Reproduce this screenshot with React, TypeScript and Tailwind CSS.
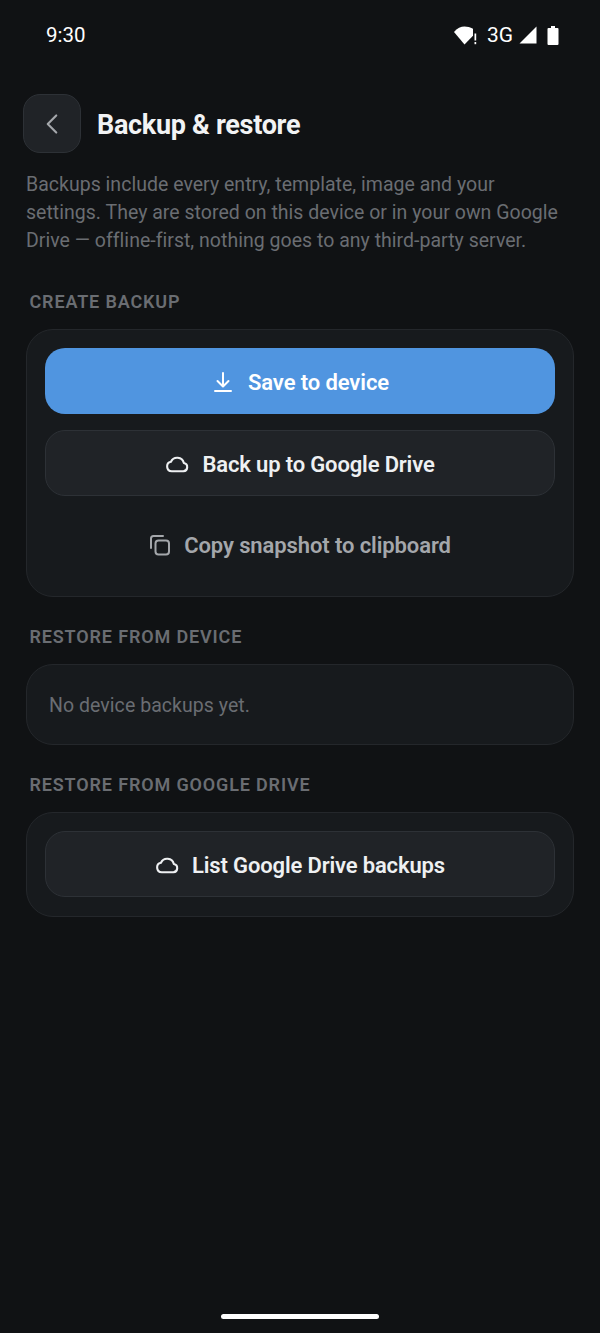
import { ChevronLeft } from "lucide-react";

function CloudIcon() {
  return (
    <svg
      width="25"
      height="25"
      viewBox="0 0 24 24"
      fill="none"
      stroke="currentColor"
      strokeWidth="2"
      strokeLinejoin="round"
    >
      <path d="M6.500 18.500a4.600 4.600 0 0 1-.8-9.100 6.600 6.600 0 0 1 12.400 1.200 4 4 0 0 1-.4 7.900z" />
    </svg>
  );
}

function SectionLabel({ children }: { children: string }) {
  return (
    <div className="pl-[3.5px] text-[18px] leading-[22px] font-semibold tracking-[0.85px] text-[#6a6d72]">
      {children}
    </div>
  );
}

function OutlineButton({ label }: { label: string }) {
  return (
    <button className="flex h-[66px] w-full items-center justify-center gap-[12px] rounded-[20px] border border-[#2d3136] bg-[#202327] pt-[3px] text-[22px] font-semibold tracking-[-0.15px] text-[#eef0f2]">
      <CloudIcon />
      {label}
    </button>
  );
}

export default function App() {
  return (
    <div className="relative flex h-[1333px] w-[600px] flex-col bg-[#101214] font-['Roboto',sans-serif]">
      {/* status bar */}
      <div className="flex h-[70px] items-center justify-between pr-[41px] pl-[46px] text-white">
        <span className="text-[20.5px] leading-none">9:30</span>
        <div className="flex items-center">
          <svg width="24" height="19" viewBox="0 0 24 19" fill="white">
            <path d="M0 6C3 2.200 7 0.500 10.500 0.500c3 0 5.500 0.700 8.500 2.300v7L10.500 18.500z" />
            <rect x="20.500" y="7.500" width="1.700" height="7" />
            <rect x="20.500" y="16" width="1.700" height="2.200" />
          </svg>
          <span className="ml-[9px] text-[21px] leading-none">3G</span>
          <svg className="ml-[6px]" width="18" height="18" viewBox="0 0 18 18" fill="white">
            <path d="M17.500 0.500V17.500H0.500z" />
          </svg>
          <svg className="ml-[10px]" width="12" height="19" viewBox="0 0 12 19" fill="white">
            <path d="M4 0h4v2h2.500a1 1 0 0 1 1 1v15a1 1 0 0 1-1 1h-9a1 1 0 0 1-1-1V3a1 1 0 0 1 1-1H4z" />
          </svg>
        </div>
      </div>

      {/* header */}
      <div className="mt-[24px] flex items-center pl-[23px]">
        <button className="flex h-[59px] w-[58px] items-center justify-center rounded-[17px] border border-[#2d3136] bg-[#202327] text-[#a4a7ab]">
          <ChevronLeft size={34} strokeWidth={1.5} />
        </button>
        <h1 className="mt-[4px] ml-[16px] text-[27px] leading-none font-bold tracking-[-0.3px] text-[#f2f3f4]">
          Backup &amp; restore
        </h1>
      </div>

      <div className="flex flex-col px-[26px]">
        <p className="mt-[18px] pr-[6px] text-[19.5px] leading-[28px] tracking-[0.02px] text-[#6a6d72]">
          Backups include every entry, template, image and your settings. They are stored on this
          device or in your own Google Drive — offline-first, nothing goes to any third-party
          server.
        </p>

        <div className="mt-[36px]">
          <SectionLabel>CREATE BACKUP</SectionLabel>
        </div>
        <div className="mt-[16px] flex flex-col rounded-[27px] border border-[#24272b] bg-[#171a1d] px-[18px] pt-[18px]">
          <button className="flex h-[66px] w-full items-center justify-center gap-[13px] rounded-[20px] bg-[#5095e0] pt-[2px] text-[22px] font-semibold tracking-[-0.1px] text-white">
            <svg
              width="24"
              height="24"
              viewBox="0 0 24 24"
              fill="none"
              stroke="currentColor"
              strokeWidth="2"
              strokeLinecap="round"
              strokeLinejoin="round"
            >
              <path d="M12 3v13M6.500 11l5.500 5.500 5.500-5.500M4 21h16" />
            </svg>
            Save to device
          </button>
          <div className="mt-[16px]">
            <OutlineButton label="Back up to Google Drive" />
          </div>
          <button className="flex h-[100px] w-full items-center justify-center gap-[13px] pb-[2px] text-[22px] font-semibold tracking-[-0.1px] text-[#a4a7ab]">
            <svg
              width="22"
              height="22"
              viewBox="0 0 22 22"
              fill="none"
              stroke="currentColor"
              strokeWidth="2"
              strokeLinecap="round"
              strokeLinejoin="round"
            >
              <rect x="6.500" y="6.500" width="13.500" height="14" rx="3" />
              <path d="M2 14V4.500A2.500 2.500 0 0 1 4.500 2H14" />
            </svg>
            Copy snapshot to clipboard
          </button>
        </div>

        <div className="mt-[29px]">
          <SectionLabel>RESTORE FROM DEVICE</SectionLabel>
        </div>
        <div className="mt-[16px] flex h-[81px] items-center rounded-[27px] border border-[#24272b] bg-[#171a1d] pt-[2px] pl-[22px] text-[19.5px] tracking-[0.05px] text-[#6a6d72]">
          No device backups yet.
        </div>

        <div className="mt-[29px]">
          <SectionLabel>RESTORE FROM GOOGLE DRIVE</SectionLabel>
        </div>
        <div className="mt-[16px] rounded-[27px] border border-[#24272b] bg-[#171a1d] px-[18px] pt-[18px] pb-[19px]">
          <OutlineButton label="List Google Drive backups" />
        </div>
      </div>

      {/* gesture pill */}
      <div className="absolute bottom-[14px] left-[221px] h-[5px] w-[158px] rounded-full bg-white" />
    </div>
  );
}
